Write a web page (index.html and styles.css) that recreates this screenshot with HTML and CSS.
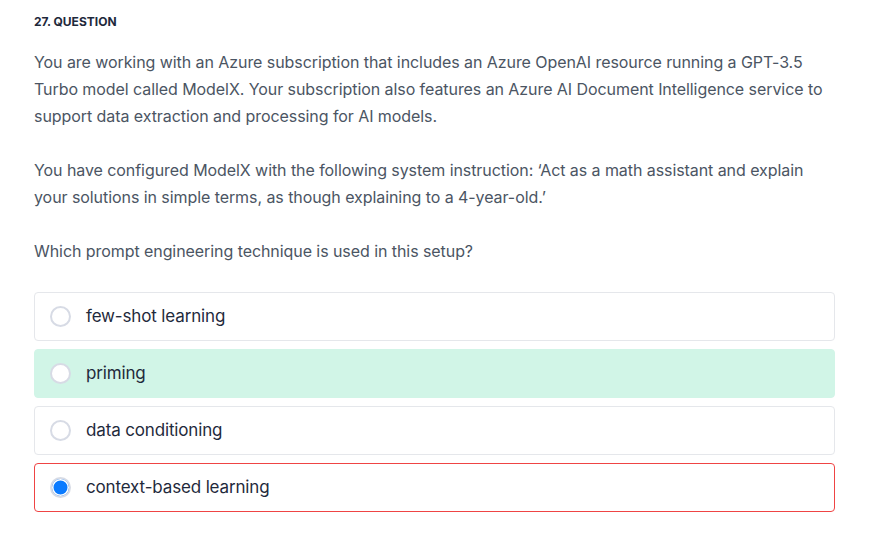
FILE: index.html
```html
<!DOCTYPE html>
<html>
<head>
<meta charset="utf-8">
<link rel="stylesheet" href="styles.css">
</head>
<body>
<div class="page">
  <div class="qnum">27. QUESTION</div>
  <div class="qtext">
    <p>You are working with an Azure subscription that includes an Azure OpenAI resource running a GPT-3.5 Turbo model called ModelX. Your subscription also features an Azure AI Document Intelligence service to support data extraction and processing for AI models.</p>
    <p>You have configured ModelX with the following system instruction: ‘Act as a math assistant and explain your solutions in simple terms, as though explaining to a 4-year-old.’</p>
    <p>Which prompt engineering technique is used in this setup?</p>
  </div>
  <div class="options">
    <div class="option"><span class="radio"></span><span class="label">few-shot learning</span></div>
    <div class="option correct"><span class="radio"></span><span class="label">priming</span></div>
    <div class="option"><span class="radio"></span><span class="label">data conditioning</span></div>
    <div class="option wrong"><span class="radio checked"></span><span class="label">context-based learning</span></div>
  </div>
</div>
</body>
</html>
```
FILE: styles.css
```css
html, body {
  margin: 0;
  padding: 0;
  background: #ffffff;
}
.page {
  padding: 14px 34px 0 34px;
  width: 801px;
  font-family: Inter, "Noto Sans", sans-serif;
}
.qnum {
  font-size: 12px;
  font-weight: 700;
  line-height: 16px;
  color: #1e293b;
  letter-spacing: 0;
}
.qtext {
  margin-top: 19px;
  font-size: 16px;
  line-height: 27px;
  color: #4b5563;
  letter-spacing: -0.07px;
}
.qtext p {
  margin: 0 0 27px 0;
}
.options {
  display: flex;
  flex-direction: column;
  gap: 8px;
  margin-top: 14px;
}
.option {
  display: flex;
  align-items: center;
  height: 47px;
  border: 1px solid #e5e7eb;
  border-radius: 4px;
  padding-left: 15px;
  background: #fff;
}
.option.correct {
  background: #d1f5e7;
  border-color: #d1f5e7;
}
.option.wrong {
  border-color: #ef4444;
}
.radio {
  width: 17px;
  height: 17px;
  border: 2px solid #d7dbe5;
  border-radius: 50%;
  background: #fff;
  flex: none;
  box-sizing: content-box;
}
.radio.checked {
  background: #0b7bff;
  box-shadow: inset 0 0 0 1.5px #fff;
}
.label {
  margin-left: 15px;
  margin-bottom: 2px;
  font-size: 17px;
  letter-spacing: -0.15px;
  color: #1f2a3c;
}
```
